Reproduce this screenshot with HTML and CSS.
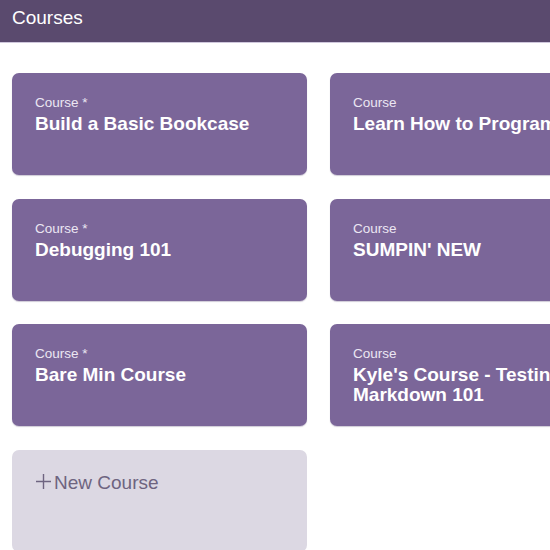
FILE: index.html
```html
<!DOCTYPE html>
<html>
<head>
<meta charset="utf-8">
<link rel="stylesheet" href="styles.css">
</head>
<body>
<header class="topbar"><span class="topbar-title">Courses</span></header>
<main class="grid">
  <div class="card"><div class="card-label">Course *</div><div class="card-title">Build a Basic Bookcase</div></div>
  <div class="card"><div class="card-label">Course</div><div class="card-title">Learn How to Program</div></div>
  <div class="card"><div class="card-label">Course *</div><div class="card-title">Debugging 101</div></div>
  <div class="card"><div class="card-label">Course</div><div class="card-title">SUMPIN' NEW</div></div>
  <div class="card"><div class="card-label">Course *</div><div class="card-title">Bare Min Course</div></div>
  <div class="card"><div class="card-label">Course</div><div class="card-title">Kyle's Course - Testing Markdown 101</div></div>
  <div class="card card-new"><svg class="plus" width="17" height="17" viewBox="0 0 17 17"><path d="M8.5 1V16M1 8.5H16" stroke="#6e6480" stroke-width="1.4" fill="none"/></svg><span>New Course</span></div>
</main>
</body>
</html>
```
FILE: styles.css
```css
html, body {
  margin: 0;
  padding: 0;
  overflow: hidden;
  width: 550px;
  height: 550px;
  background: #ffffff;
  font-family: "Liberation Sans", Arial, sans-serif;
}
.topbar {
  height: 42px;
  background: #5a4a6e;
  border-bottom: 1px solid #cfc7dc;
  display: flex;
  align-items: center;
  padding-left: 12px;
  box-sizing: content-box;
}
.topbar-title {
  color: #ffffff;
  font-size: 19px;
  margin-top: -6px;
}
.grid {
  display: grid;
  grid-template-columns: 295px 295px;
  grid-auto-rows: 102px;
  column-gap: 23px;
  row-gap: 23.5px;
  padding: 30px 0 0 12px;
  width: 700px;
}
.card {
  background: #7b6699;
  border-radius: 7px;
  padding: 22px 23px 0 23px;
  color: #ffffff;
  box-shadow: 0 1px 1px rgba(60, 40, 90, 0.25);
  overflow: hidden;
}
.card-label {
  font-size: 13.5px;
  line-height: 16px;
  color: #ece6f3;
}
.card-title {
  font-size: 19px;
  font-weight: bold;
  line-height: 19.5px;
  margin-top: 3px;
}
.card-new {
  background: #dcd8e3;
  color: #6e6480;
  font-size: 19px;
  padding-top: 22px;
  box-shadow: none;
  display: flex;
  align-items: flex-start;
}
.plus {
  margin-right: 2px;
  margin-top: 1px;
}
```
